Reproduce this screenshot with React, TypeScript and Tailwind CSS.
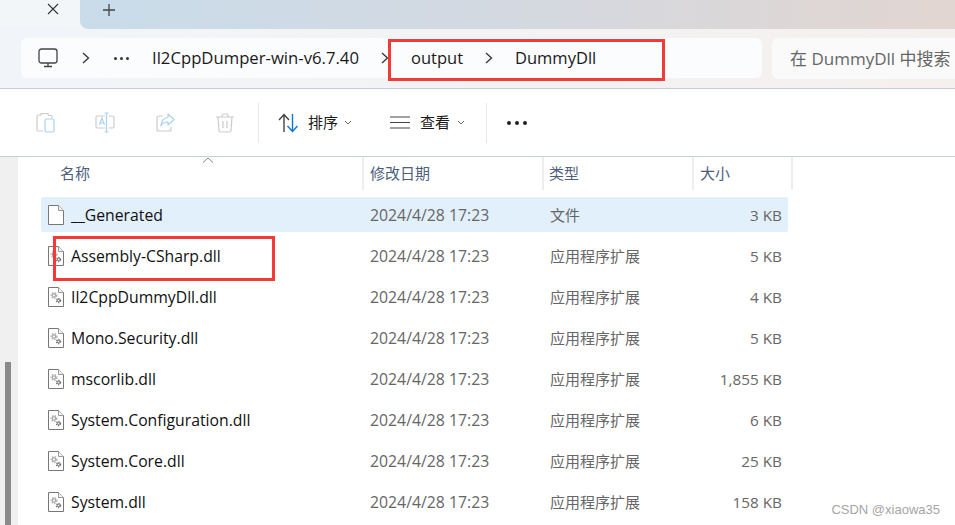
const FONT = "font-['Open_Sans','Noto_Sans_CJK_SC',sans-serif]";

const FILES = [
  { name: "__Generated", type: "文件", size: "3 KB", plain: true, selected: true },
  { name: "Assembly-CSharp.dll", type: "应用程序扩展", size: "5 KB" },
  { name: "Il2CppDummyDll.dll", type: "应用程序扩展", size: "4 KB" },
  { name: "Mono.Security.dll", type: "应用程序扩展", size: "5 KB" },
  { name: "mscorlib.dll", type: "应用程序扩展", size: "1,855 KB" },
  { name: "System.Configuration.dll", type: "应用程序扩展", size: "6 KB" },
  { name: "System.Core.dll", type: "应用程序扩展", size: "25 KB" },
  { name: "System.dll", type: "应用程序扩展", size: "158 KB" },
];

function Chevron({ className = "" }: { className?: string }) {
  return (
    <svg width="8" height="12" viewBox="0 0 8 12" fill="none" stroke="#333" strokeWidth="1.3" className={className}>
      <path d="M1 1l5.5 5L1 11" />
    </svg>
  );
}

function ChevronDown({ className = "" }: { className?: string }) {
  return (
    <svg width="8" height="5" viewBox="0 0 8 5" fill="none" stroke="#666" strokeWidth="1" className={className}>
      <path d="M1 1l3 3 3-3" />
    </svg>
  );
}

function FileIcon({ plain }: { plain?: boolean }) {
  return (
    <svg width="16" height="20" viewBox="0 0 16 20" className="shrink-0">
      <path d="M.5.5h10l5 5v14H.5z" fill="#fff" stroke="#777" />
      <path d="M10.5.5v5h5" fill="#f4f4f4" stroke="#999" />
      {!plain && (
        <g fill="none">
          <circle cx="6" cy="8.500" r="2.800" stroke="#b4b4b4" strokeWidth="1.400" strokeDasharray="1.500 1.200" />
          <circle cx="6" cy="8.500" r="1.700" stroke="#a8a8a8" strokeWidth="1.200" />
          <circle cx="10.500" cy="13.500" r="2.100" stroke="#707070" strokeWidth="1.200" strokeDasharray="1.200 1" />
          <circle cx="10.500" cy="13.500" r="1.200" stroke="#666" strokeWidth="1" />
        </g>
      )}
    </svg>
  );
}

function ToolbarIcons() {
  return (
    <div className="flex items-center gap-[40px] pl-[36px]">
      <svg width="19" height="21" viewBox="0 0 19 21" fill="none">
        <path d="M5 3H2.5A1.5 1.5 0 0 0 1 4.500v13A1.500 1.500 0 0 0 2.500 19H7" stroke="#ccc" strokeWidth="1.2" />
        <path d="M5 3.500V1.500h7v2M12 3.500h2.500A1.500 1.500 0 0 1 16 5v1" stroke="#ccc" strokeWidth="1.2" />
        <rect x="9" y="7" width="9" height="13" rx="1.500" stroke="#a8d2f2" strokeWidth="1.2" />
      </svg>
      <svg width="20" height="21" viewBox="0 0 20 21" fill="none">
        <path d="M10 4H2.500A1.500 1.500 0 0 0 1 5.500v9A1.500 1.500 0 0 0 2.500 16H10M14 4h3.500A1.500 1.500 0 0 1 19 5.500v9a1.500 1.500 0 0 1-1.500 1.500H14" stroke="#ccc" strokeWidth="1.2" />
        <path d="M9.500 1h4M9.500 20h4M11.500 1v19" stroke="#a8d2f2" strokeWidth="1.2" />
        <path d="M4.500 13l2.500-7 2.500 7M5.400 11h3.200" stroke="#a8d2f2" strokeWidth="1.1" />
      </svg>
      <svg width="19" height="20" viewBox="0 0 19 20" fill="none" className="ml-px">
        <path d="M7 3H3a2 2 0 0 0-2 2v11a2 2 0 0 0 2 2h10a2 2 0 0 0 2-2v-2" stroke="#ccc" strokeWidth="1.2" />
        <path d="M12 1l6 5.500-6 5.500V9c-3.500 0-6 1-7 4 0-5 3-8 7-8.500z" stroke="#a8d2f2" strokeWidth="1.2" strokeLinejoin="round" />
      </svg>
      <svg width="18" height="20" viewBox="0 0 18 20" fill="none" stroke="#ccc" strokeWidth="1.2" className="ml-px">
        <path d="M0 4h18M6 4V2.500A1.500 1.500 0 0 1 7.500 1h3A1.500 1.500 0 0 1 12 2.500V4M2 4l1 13.500A1.500 1.500 0 0 0 4.500 19h9a1.500 1.500 0 0 0 1.500-1.500L16 4M7 8v7M11 8v7" />
      </svg>
    </div>
  );
}

function Separator({ className = "" }: { className?: string }) {
  return <div className={`w-px h-10 bg-[#e6e6e6] ${className}`} />;
}

export default function App() {
  return (
    <div className={`relative w-[955px] h-[525px] overflow-hidden bg-white text-[#1a1a1a] ${FONT}`}>
      {/* tab strip */}
      <div className="flex h-[29px] bg-[#f3f6f9]">
        <div className="w-[80px] pl-[47px] pt-[3px]">
          <svg width="12" height="12" viewBox="0 0 12 12" stroke="#333" strokeWidth="1.1">
            <path d="M1 1l10 10M11 1L1 11" />
          </svg>
        </div>
        <div className="flex-1 pl-[23px] pt-[4px] rounded-bl-lg bg-gradient-to-r from-[#c9dcea] via-[#d4d9e1] to-[#e2d6d1]">
          <svg width="12" height="12" viewBox="0 0 12 12" stroke="#444" strokeWidth="1.3">
            <path d="M6 0v12M0 6h12" />
          </svg>
        </div>
      </div>

      {/* address row */}
      <div className="flex h-[60px] gap-[10px] pl-[21px] pt-[9px] border-b border-[#c8ced6] bg-gradient-to-r from-[#f1f5f9] to-[#f5f0ee]">
        <div className="flex items-center w-[741px] h-[40px] rounded-md bg-[#fbfcfd] text-[16.5px] leading-[40px]">
          <svg width="20" height="20" viewBox="0 0 20 20" fill="none" stroke="#444" strokeWidth="1.3" className="ml-[17px]">
            <rect x="1" y="1" width="18" height="14" rx="2.500" />
            <path d="M6 18.500h8M10 15v3.500" />
          </svg>
          <Chevron className="ml-[24px]" />
          <div className="flex gap-[3px] ml-[24px]">
            <span className="size-[3px] rounded-full bg-[#333]" />
            <span className="size-[3px] rounded-full bg-[#333]" />
            <span className="size-[3px] rounded-full bg-[#333]" />
          </div>
          <span className="ml-[23px] w-[229px] text-[16.7px] whitespace-nowrap">Il2CppDumper-win-v6.7.40</span>
          <Chevron />
          <span className="ml-[22px] w-[74px]">output</span>
          <Chevron />
          <span className="ml-[22px]">DummyDll</span>
        </div>
        <div className="flex-1 h-[41px] pl-[18px] rounded-l-md bg-[#fafafa] text-[17px] leading-[41px] text-[#666] whitespace-nowrap">
          在 DummyDll 中搜索
        </div>
      </div>

      {/* command bar */}
      <div className="flex items-center h-[68px] border-b border-[#c8ced6] text-[15px]">
        <ToolbarIcons />
        <Separator className="ml-[24px]" />
        <svg width="21" height="20" viewBox="0 0 21 20" fill="none" strokeWidth="1.4" className="ml-[19px]">
          <path d="M6 19V2M1 7l5-5.500L11 7" stroke="#444" />
          <path d="M14.500 1v17M9.500 13l5 5.500 5-5.500" stroke="#0c78d4" />
        </svg>
        <span className="ml-[9px]">排序</span>
        <ChevronDown className="ml-[6px]" />
        <svg width="20" height="13" viewBox="0 0 20 13" stroke="#444" strokeWidth="1.2" className="ml-[38px]">
          <path d="M0 1h20M0 6.500h20M0 12h20" />
        </svg>
        <span className="ml-[10px]">查看</span>
        <ChevronDown className="ml-[7px]" />
        <Separator className="ml-[21px]" />
        <div className="flex gap-[4px] ml-[20px]">
          <span className="size-[4px] rounded-full bg-[#222]" />
          <span className="size-[4px] rounded-full bg-[#222]" />
          <span className="size-[4px] rounded-full bg-[#222]" />
        </div>
      </div>

      {/* body */}
      <div className="flex h-[368px]">
        <aside className="flex flex-col justify-end w-[18px] pl-[5px] mr-[2px] bg-[#f0f0f0] border-r border-[#f0f0f0]">
          <div className="w-[6px] h-[163px] bg-[#8a8a8a]" />
        </aside>
        <div className="flex-1 pl-[21px]">
          <div className="grid grid-cols-[321px_180px_150px_101px] h-[33px] text-[15px] leading-[32px] text-[#4c607a]">
            <div className="relative pl-[19px]">
              名称
              <svg width="12" height="6" viewBox="0 0 12 6" fill="none" stroke="#888" className="absolute left-[161px] top-0">
                <path d="M1 5.500l5-4.500 5 4.500" />
              </svg>
            </div>
            <div className="pl-[6px] border-l-2 border-[#eceef0]">修改日期</div>
            <div className="pl-[5px] border-l-2 border-[#eceef0]">类型</div>
            <div className="pl-[6px] border-l-2 border-r-2 border-[#eceef0]">大小</div>
          </div>
          <div className="flex flex-col gap-[6px] pt-[7px] w-[747px]">
            {FILES.map((file) => (
              <div
                key={file.name}
                className={`grid grid-cols-[321px_180px_150px_90px] items-center h-[35px] rounded-[2px] text-[15.3px] text-[#666] ${
                  file.selected ? "bg-[#e2f0fb]" : ""
                }`}
              >
                <div className="flex items-center gap-[7px] pl-[7px] text-[#111] text-[15.75px]">
                  <FileIcon plain={file.plain} />
                  <span className="pt-[2px]">{file.name}</span>
                </div>
                <div className="pl-[8px] pt-[2px] text-[15.8px]">2024/4/28 17:23</div>
                <div className="pl-[8px] pt-[2px] text-[15px]">{file.type}</div>
                <div className="pt-[2px] text-right">{file.size}</div>
              </div>
            ))}
          </div>
        </div>
      </div>

      {/* annotations */}
      <div className="absolute left-[388px] top-[39px] w-[277px] h-[42px] border-[3px] border-[#f53838]" />
      <div className="absolute left-[53px] top-[236px] w-[222px] h-[45px] border-[3px] border-[#f53838]" />
      <div className="absolute right-[15px] bottom-[6px] font-['Liberation_Sans',sans-serif] text-[13px] text-[#a5a5a5]">CSDN @xiaowa35</div>
    </div>
  );
}
